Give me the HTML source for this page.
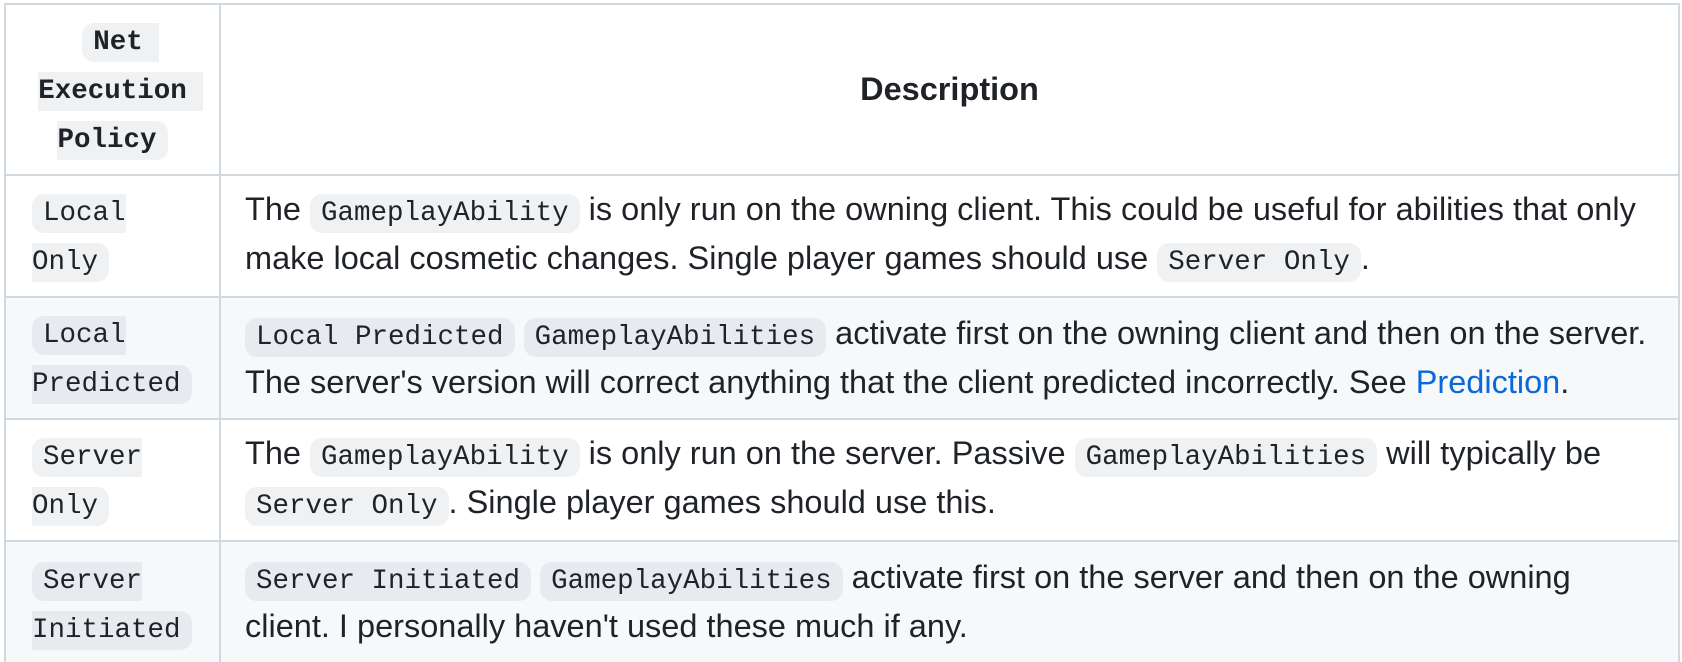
<!DOCTYPE html>
<html><head><meta charset="utf-8"><style>
html,body{margin:0;padding:0;background:#fff;width:1682px;height:662px;overflow:hidden}
#wrap{position:relative;width:1682px;height:662px;overflow:hidden}
body{font-family:"Liberation Sans",Arial,sans-serif;color:#1f2328;font-size:32.5px;line-height:45px}
table{position:absolute;left:4px;top:3px;border-collapse:collapse;table-layout:fixed;width:1676px}
td,th{border:2px solid #d1d9e0;padding:11px 24px}
th{font-weight:bold;text-align:center}
td:first-child,th:first-child{padding:11px 26px}
tr.alt td{background:#f6f8fa}
tr.last td{padding-top:13px;padding-bottom:30px;vertical-align:top}
code{font-family:"Liberation Mono",monospace;font-size:27.5px;background:rgba(175,184,193,0.2);border-radius:12px;padding:4px 11px;white-space:pre-wrap}
td:first-child code{white-space:normal}
th code{font-weight:bold}
a{color:#0969da;text-decoration:none}
.nw{white-space:nowrap}
</style></head><body><div id="wrap">
<table>
<colgroup><col style="width:215px"><col></colgroup>
<tr><th style="height:135px"><code>Net Execution Policy</code></th><th>Description</th></tr>
<tr><td><code>Local Only</code></td><td class="nw">The <code>GameplayAbility</code> is only run on the owning client. This could be useful for abilities that only<br>make local cosmetic changes. Single player games should use <code>Server Only</code>.</td></tr>
<tr class="alt"><td><code>Local Predicted</code></td><td class="nw"><code>Local Predicted</code> <code>GameplayAbilities</code> activate first on the owning client and then on the server.<br>The server's version will correct anything that the client predicted incorrectly. See <a>Prediction</a>.</td></tr>
<tr><td><code>Server Only</code></td><td class="nw">The <code>GameplayAbility</code> is only run on the server. Passive <code>GameplayAbilities</code> will typically be<br><code>Server Only</code>. Single player games should use this.</td></tr>
<tr class="alt last"><td><code>Server Initiated</code></td><td class="nw"><code>Server Initiated</code> <code>GameplayAbilities</code> activate first on the server and then on the owning<br>client. I personally haven't used these much if any.</td></tr>
</table>
</div></body></html>
